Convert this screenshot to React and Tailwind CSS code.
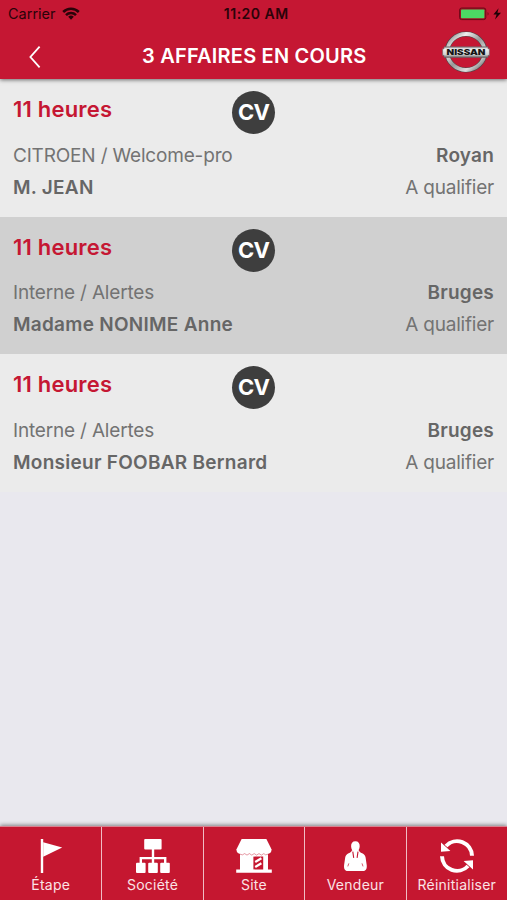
import React, { useState } from 'react';

const affaires = [
    { id: 1, delai: '11 heures', badge: 'CV', source: 'CITROEN / Welcome-pro', client: 'M. JEAN', site: 'Royan', statut: 'A qualifier' },
    { id: 2, delai: '11 heures', badge: 'CV', source: 'Interne / Alertes', client: 'Madame NONIME Anne', site: 'Bruges', statut: 'A qualifier' },
    { id: 3, delai: '11 heures', badge: 'CV', source: 'Interne / Alertes', client: 'Monsieur FOOBAR Bernard', site: 'Bruges', statut: 'A qualifier' },
];

const WifiIcon = () => (
    <svg width="18" height="13" viewBox="0 0 18 13" fill="none" stroke="#2a0309" strokeWidth="2.5">
        <path d="M1.2 5a11 11 0 0 1 15.6 0" />
        <path d="M4 8.2a7 7 0 0 1 10 0" />
        <path d="M6.2 9.8a4 4 0 0 1 5.6 0L9 12.8z" fill="#2a0309" stroke="none" />
    </svg>
);

const BatteryIcon = () => (
    <svg width="43" height="14" viewBox="0 0 43 14">
        <rect x="0.6" y="1" width="26.2" height="11.6" rx="2" fill="#a30f25" stroke="#6d0a19" strokeWidth="1" />
        <rect x="2" y="2.4" width="23.4" height="8.8" rx="0.8" fill="#4cd964" />
        <path d="M28.6 5v3.6c1.3-.4 1.3-3.2 0-3.6z" fill="#6d0a19" />
        <path d="M39.6 1.2 34.4 7.6h3.2l-1.6 5 6-6.8h-3.6z" fill="#1d0206" />
    </svg>
);

const NissanLogo = () => (
    <svg width="50" height="44" viewBox="0 0 50 44">
        <defs>
            <linearGradient id="ring" x1="0" y1="0" x2="1" y2="1">
                <stop offset="0" stopColor="#777" />
                <stop offset="0.25" stopColor="#eee" />
                <stop offset="0.5" stopColor="#999" />
                <stop offset="0.75" stopColor="#ddd" />
                <stop offset="1" stopColor="#555" />
            </linearGradient>
            <linearGradient id="bar" x1="0" y1="0" x2="0" y2="1">
                <stop offset="0" stopColor="#8a8a8a" />
                <stop offset="0.2" stopColor="#f2f2f2" />
                <stop offset="0.75" stopColor="#cfcfcf" />
                <stop offset="1" stopColor="#666" />
            </linearGradient>
        </defs>
        <ellipse cx="25" cy="21" rx="18.8" ry="18" fill="none" stroke="#4d4548" strokeWidth="5" />
        <ellipse cx="25" cy="21" rx="18.8" ry="18" fill="none" stroke="url(#ring)" strokeWidth="3.8" />
        <path d="M3 15.8h44v2h1.4v6.6H47v2H3v-2H1.6v-6.6H3z" fill="url(#bar)" stroke="#6b6165" strokeWidth="0.6" />
        <text x="25" y="24" textAnchor="middle" textLength="39" lengthAdjust="spacingAndGlyphs" fontFamily="Inter, sans-serif" fontWeight="900" fontSize="7.6" fill="#161616">NISSAN</text>
    </svg>
);

const FlagIcon = () => (
    <svg width="36" height="36" viewBox="0 0 36 36" fill="#fff">
        <rect x="7.8" y="1" width="2.4" height="34" />
        <path d="M10.2 4.2 29.2 9.6 10.2 18.8z" />
    </svg>
);

const SitemapIcon = () => (
    <svg width="36" height="36" viewBox="0 0 36 36" fill="#fff">
        <rect x="9.2" y="1" width="17.4" height="10.4" rx="1" />
        <path d="M16.8 11h2.4v8H31.4v6.4H29v-4.2H19.2v4.2h-2.4v-4.2H7v4.2H4.6V19h12.2z" />
        <rect x="1" y="24.8" width="9.6" height="10.2" rx="1" />
        <rect x="13.2" y="24.8" width="9.6" height="10.2" rx="1" />
        <rect x="25.2" y="24.8" width="9.6" height="10.2" rx="1" />
    </svg>
);

const ShopIcon = () => (
    <svg width="36" height="36" viewBox="0 0 36 36">
        <path d="M5.6 1h24.8l5.2 10.6c0 2.8-1.8 4.4-4 4.4H4.4c-2.2 0-4-1.6-4-4.4z" fill="#fff" />
        <path d="M4 15h28v16.4h3.8v3.4H.2v-3.4H4z" fill="#fff" />
        <path d="M17.4 18.6h9.8v12.8h-9.8z" fill="#c51730" />
        <path d="M4 16.2q2.6 1.6 4.6-.6 2.4 3 4.8 0 2.4 3 4.8 0 2.4 3 4.8 0 2.4 3 4.8 0 1.6 2.2 4.2.6" fill="none" stroke="#c51730" strokeWidth="0.8" strokeOpacity="0.55" />
        <path d="m19.2 24 6.2-3.8M19.2 29l6.2-3.8" stroke="#fff" strokeWidth="2.2" />
    </svg>
);

const SellerIcon = () => (
    <svg width="36" height="36" viewBox="0 0 36 36">
        <path d="M18.4 3.2c3 0 4.4 2 4.3 5-.1 3-1.9 6-4.3 6s-4.2-3-4.3-6c-.1-3 1.3-5 4.3-5z" fill="#fff" />
        <path d="M15 12.2h6.8c.4 1.6 1.6 2.2 3.4 3 2 .9 2.9 2 3.4 4.4l1.1 7.4c.4 3.4-.6 6-3.6 6H10.7c-3 0-4-2.6-3.6-6l1.1-7.4c.5-2.4 1.4-3.5 3.4-4.4 1.8-.8 3-1.4 3.4-3z" fill="#fff" />
        <path d="m15.8 13.6.9 6.2M21 13.6l-.9 6.2" stroke="#c51730" strokeWidth="1.1" />
        <path d="m11.8 25.4-1 3M25 25.4l1 3" fill="none" stroke="#c51730" strokeWidth="0.7" />
    </svg>
);

const ResetIcon = () => (
    <svg width="36" height="36" viewBox="0 0 36 36" fill="none" stroke="#fff" strokeWidth="4">
        <path d="M7 8A15 15 0 0 1 33 17.8" />
        <path d="M29 28A15 15 0 0 1 3 18.2" />
        <path d="M2 4.6V13.8L11.4 13z" fill="#fff" stroke="none" />
        <path d="M34 31.4V22.2L24.6 23z" fill="#fff" stroke="none" />
    </svg>
);

const onglets = [
    { nom: 'Étape', Icon: FlagIcon },
    { nom: 'Société', Icon: SitemapIcon },
    { nom: 'Site', Icon: ShopIcon },
    { nom: 'Vendeur', Icon: SellerIcon },
    { nom: 'Réinitialiser', Icon: ResetIcon },
];

const Affaire = ({ affaire, selected, onSelect }) => (
    <li
        onClick={onSelect}
        className={`h-[137.5px] pt-3 px-[13px] text-[#666] ${selected ? 'bg-[#d0d0d0]' : 'bg-[#ebebeb]'}`}
    >
        <div className="grid grid-cols-[1fr_43px_1fr] mb-[5.5px]">
            <span className="text-[22px] leading-[37px] font-semibold tracking-[0.2px] text-[#c51733]">{affaire.delai}</span>
            <span className="size-[43px] rounded-full bg-[#3e3e3e] text-white text-[22px] font-bold tracking-[-0.8px] flex items-center justify-center">
                {affaire.badge}
            </span>
        </div>
        <div className="flex justify-between text-[19px] leading-8">
            <span className="tracking-[-0.18px] text-[#737373]">{affaire.source}</span>
            <span className="font-semibold tracking-[0.2px]">{affaire.site}</span>
        </div>
        <div className="flex justify-between text-[19px] leading-8">
            <span className="font-semibold tracking-[0.27px]">{affaire.client}</span>
            <span className="tracking-[-0.2px] text-[#737373]">{affaire.statut}</span>
        </div>
    </li>
);

const App = () => {
    const [selectedId, setSelectedId] = useState(2);

    return (
        <div className="h-screen flex flex-col overflow-hidden bg-[#e9e8ee] font-['Inter',sans-serif]">
            <header className="relative z-10 h-[79px] shrink-0 bg-[#c51733] shadow-[0_1px_4px_rgba(0,0,0,0.55)]">
                <div className="h-[27px] grid grid-cols-3 items-center pl-2 pr-[5.5px] text-[#2a0309]">
                    <div className="flex items-center gap-[6px] text-[14.5px]">
                        <span>Carrier</span>
                        <WifiIcon />
                    </div>
                    <span className="pl-[3px] text-center text-[14px] font-semibold tracking-[0.5px]">11:20 AM</span>
                    <div className="flex justify-end">
                        <BatteryIcon />
                    </div>
                </div>
                <div className="h-[51px] grid grid-cols-[70px_1fr_70px] items-center">
                    <button className="pl-7 pt-2">
                        <svg width="14" height="24" viewBox="0 0 14 24" fill="none" stroke="#fff" strokeWidth="1.8">
                            <path d="M11.6 1.6 2.4 12 11.6 22.4" />
                        </svg>
                    </button>
                    <h1 className="pt-[6px] pl-[1.5px] text-center text-[20px] font-semibold tracking-[0.2px] text-white">{affaires.length} AFFAIRES EN COURS</h1>
                    <div className="pl-1">
                        <NissanLogo />
                    </div>
                </div>
            </header>

            <ul className="flex-1">
                {affaires.map((affaire) => (
                    <Affaire
                        key={affaire.id}
                        affaire={affaire}
                        selected={affaire.id === selectedId}
                        onSelect={() => setSelectedId(affaire.id)}
                    />
                ))}
            </ul>

            <nav className="h-[74px] shrink-0 grid grid-cols-5 border-t border-[#d9818f] bg-[#c51730] text-white shadow-[0_-1px_4px_rgba(0,0,0,0.45)]">
                {onglets.map(({ nom, Icon }) => (
                    <button key={nom} className="flex flex-col items-center pt-[10.5px] border-l border-[#f0bcc4] first:border-l-0">
                        <Icon />
                        <span className="mt-[1.5px] text-[14px] leading-5 tracking-[0.25px] text-[#fbe3e6]">{nom}</span>
                    </button>
                ))}
            </nav>
        </div>
    );
};

export default App;
